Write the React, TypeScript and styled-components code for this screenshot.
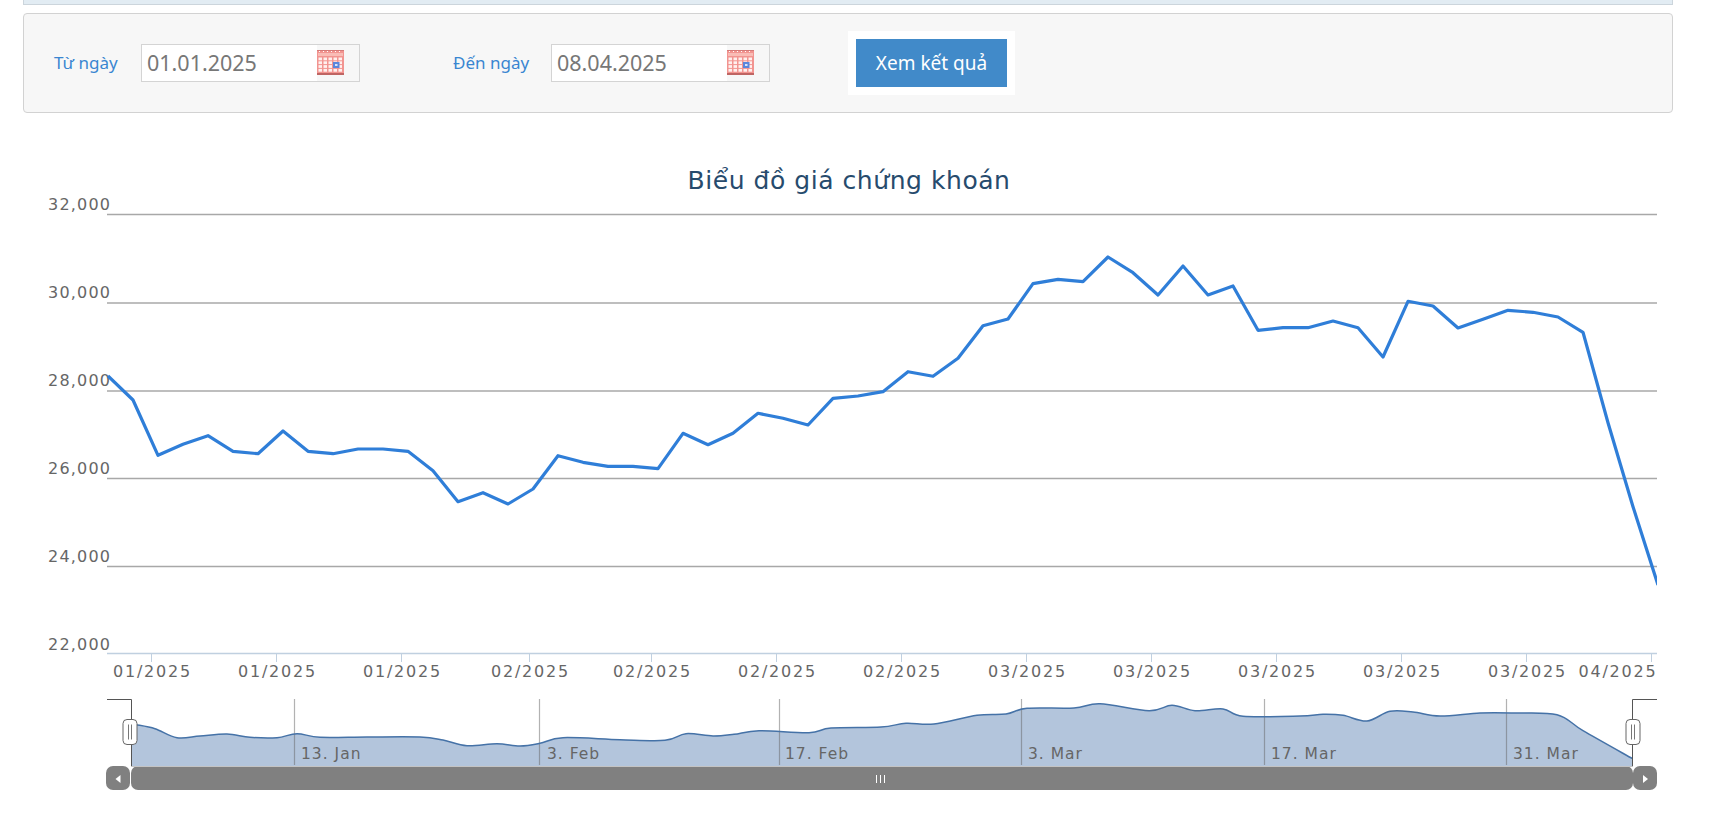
import styled, { createGlobalStyle } from 'styled-components';

const GlobalStyle = createGlobalStyle`
  html, body {
    margin: 0;
    padding: 0;
    background: #fff;
    overflow: hidden;
  }
`;

const CHART_FONT = '"DejaVu Sans", Verdana, sans-serif';

const Page = styled.div`
  width: 1717px;
  height: 821px;
  font-family: "Noto Sans", "Liberation Sans", sans-serif;
`;

const TopStrip = styled.div`
  box-sizing: border-box;
  width: 1650px;
  height: 5px;
  margin: 0 0 8px 23px;
  background: #e2ecf3;
  border: 1px solid #ccd5dc;
  border-top: none;
`;

const FilterPanel = styled.div`
  box-sizing: border-box;
  display: flex;
  align-items: center;
  width: 1650px;
  height: 100px;
  margin-left: 23px;
  padding-left: 30px;
  background: #f7f7f7;
  border: 1px solid #d2d2d2;
  border-radius: 4px;
`;

const FieldLabel = styled.label<{ $width: number }>`
  width: ${p => p.$width}px;
  color: #3a86d1;
  font-size: 17px;
  line-height: 20px;
`;

const DateBox = styled.div<{ $gap: number }>`
  box-sizing: border-box;
  display: flex;
  align-items: center;
  width: 219px;
  height: 38px;
  margin-right: ${p => p.$gap}px;
  background: #f7f7f7;
  border: 1px solid #d4d4d4;
`;

const DateValue = styled.div`
  box-sizing: border-box;
  width: 175px;
  height: 100%;
  padding-left: 5px;
  background: #fff;
  color: #777;
  font-size: 21.5px;
  line-height: 35px;
`;

const CalendarSvg = styled.svg`
  display: block;
  margin-top: -2px;
`;

const ButtonFrame = styled.div`
  padding: 8px;
  background: #fff;
`;

const SubmitButton = styled.button`
  display: block;
  width: 151px;
  height: 48px;
  padding: 0;
  border: none;
  background: #418ac9;
  color: #fff;
  font-family: inherit;
  font-size: 19px;
`;

const ChartSvg = styled.svg`
  display: block;
`;

const ChartTitle = styled.text`
  fill: #274b6d;
  font-family: ${CHART_FONT};
  font-size: 25px;
  letter-spacing: 0.55px;
  text-anchor: middle;
`;

const AxisLabel = styled.text<{ $wide?: boolean }>`
  fill: #666;
  font-family: ${CHART_FONT};
  font-size: 16px;
  letter-spacing: ${p => (p.$wide ? 1.8 : 1.2)}px;
`;

const NavigatorLabel = styled.text`
  fill: #666;
  font-family: ${CHART_FONT};
  font-size: 15.5px;
  letter-spacing: 1px;
`;

const PLOT_LEFT = 107;
const PLOT_RIGHT = 1657;

// closing prices read as pixel rows, one every 25px from x=108
const priceRows = [
  376, 400, 455.3, 444.3, 435.7, 451.3, 453.7, 431, 451.3, 453.7, 449, 449, 451.3, 470.7, 501.7, 492.7,
  504, 489, 455.7, 462.3, 466.3, 466.3, 468.7, 433.3, 444.7, 433.3, 413.3, 418.3, 425, 398.3, 396, 391.7,
  371.7, 376.3, 358.3, 325.7, 319, 283.7, 279.3, 281.7, 257, 272.7, 295, 266, 295, 286, 330.3, 327.7,
  327.7, 321, 327.7, 357, 301.3, 306, 328, 319.3, 310.3, 312.3, 317, 332.3, 422.7, 506.7, 585,
];

const gridRows = [
  { y: 214.5, label: '32,000', textY: 210 },
  { y: 303, label: '30,000', textY: 298 },
  { y: 391, label: '28,000', textY: 386 },
  { y: 478.5, label: '26,000', textY: 474 },
  { y: 566.5, label: '24,000', textY: 562 },
];

const xTicks = [
  { x: 151.5, label: '01/2025' },
  { x: 276.5, label: '01/2025' },
  { x: 401.5, label: '01/2025' },
  { x: 529.5, label: '02/2025' },
  { x: 651.5, label: '02/2025' },
  { x: 776.5, label: '02/2025' },
  { x: 901.5, label: '02/2025' },
  { x: 1026.5, label: '03/2025' },
  { x: 1151.5, label: '03/2025' },
  { x: 1276.5, label: '03/2025' },
  { x: 1401.5, label: '03/2025' },
  { x: 1526.5, label: '03/2025' },
  { x: 1651.5, label: '04/2025', labelX: 1617 },
];

const navigatorTicks = [
  { x: 294.5, label: '13. Jan', textX: 301 },
  { x: 539.5, label: '3. Feb', textX: 547 },
  { x: 779.5, label: '17. Feb', textX: 785 },
  { x: 1021.5, label: '3. Mar', textX: 1028 },
  { x: 1264.5, label: '17. Mar', textX: 1271 },
  { x: 1506.5, label: '31. Mar', textX: 1513 },
];

const navigatorLine: [number, number][] = [
  [136, 724.7], [155, 728.7], [177, 737.7], [200, 736], [227, 734], [250, 737.3], [277, 737.7], [297, 733.7],
  [320, 737.3], [367, 737], [420, 737], [443, 740], [467, 745.7], [497, 743.7], [520, 746], [540, 743.3],
  [563, 737.7], [620, 739.7], [665, 740.3], [686, 733.7], [713, 736], [734, 734.3], [759, 730.7], [809, 732.7],
  [831, 728], [881, 727], [906, 723.3], [934, 724], [977, 715.3], [1006, 714], [1027, 708.3], [1074, 708],
  [1100, 703.7], [1149, 710.7], [1172, 705.3], [1195, 710.7], [1223, 709], [1243, 716.3], [1300, 716],
  [1323, 714.3], [1343, 715.3], [1367, 721], [1390, 711.3], [1413, 712], [1440, 716], [1480, 713], [1513, 713],
  [1557, 714.7], [1583, 730.7], [1632.5, 758.7],
];

function toLine(points: [number, number][]) {
  return points.map(([x, y], i) => `${i ? 'L' : 'M'}${x} ${y}`).join(' ');
}

function toSmoothLine(points: [number, number][]) {
  let d = `M${points[0][0]} ${points[0][1]}`;
  for (let i = 0; i < points.length - 1; i++) {
    const p0 = points[Math.max(i - 1, 0)];
    const p1 = points[i];
    const p2 = points[i + 1];
    const p3 = points[Math.min(i + 2, points.length - 1)];
    const c1x = p1[0] + (p2[0] - p0[0]) / 6;
    const c1y = p1[1] + (p2[1] - p0[1]) / 6;
    const c2x = p2[0] - (p3[0] - p1[0]) / 6;
    const c2y = p2[1] - (p3[1] - p1[1]) / 6;
    d += ` C${c1x} ${c1y} ${c2x} ${c2y} ${p2[0]} ${p2[1]}`;
  }
  return d;
}

function CalendarIcon() {
  const cells = [];
  for (let row = 0; row < 4; row++) {
    for (let col = 0; col < 5; col++) {
      cells.push(<rect key={`${row}-${col}`} x={1.5 + col * 5} y={7.5 + row * 3.8} width={3.5} height={2.8} fill="#fff0ee" />);
    }
  }
  return (
    <CalendarSvg width="27" height="25" viewBox="0 0 27 25">
      <rect width="27" height="25" fill="#f29490" />
      <rect x="0" y="0" width="27" height="1" fill="#d57a78" />
      <rect x="1" y="3" width="25" height="3" fill="#f9bcb6" />
      <path d="M2 1.5h1M6 1.5h1M10 1.5h1M14 1.5h1M18 1.5h1M22 1.5h1" stroke="#fff" strokeWidth="1" />
      {cells}
      <rect x="16" y="12" width="6.5" height="6" fill="#5a86dc" />
      <rect x="18" y="14" width="2.5" height="2" fill="#d6e4f8" />
      <rect y="23" width="27" height="2" fill="#bf6563" />
    </CalendarSvg>
  );
}

function PriceSeries() {
  const points = priceRows.map((y, i) => [108 + i * 25, y] as [number, number]);
  return (
    <>
      <clipPath id="plot-clip">
        <rect x={PLOT_LEFT} y={200} width={PLOT_RIGHT - PLOT_LEFT} height={460} />
      </clipPath>
      <path d={toLine(points)} fill="none" stroke="#2f7ed8" strokeWidth={3.2} strokeLinejoin="round" clipPath="url(#plot-clip)" />
    </>
  );
}

function NavigatorHandle({ x }: { x: number }) {
  return (
    <g>
      <rect x={x - 7} y={719.5} width={14} height={25} rx={4} fill="#fff" stroke="#666" />
      <path d={`M${x - 1.5} 724.5V739.5M${x + 1.5} 724.5V739.5`} stroke="#777" />
    </g>
  );
}

function Navigator() {
  const line = toSmoothLine(navigatorLine);
  return (
    <g>
      <path d={`${line} L1632.5 766 L131.5 766 L131.5 724 L136 724.7 Z`} fill="#b3c5dc" />
      {navigatorTicks.map(t => (
        <g key={t.label}>
          <path d={`M${t.x} 699V765`} stroke="#666" strokeOpacity={0.5} strokeWidth={1.2} />
          <NavigatorLabel x={t.textX} y={759}>{t.label}</NavigatorLabel>
        </g>
      ))}
      <path d={line} fill="none" stroke="#4572a7" strokeWidth={1.5} />
      <path d="M107 699.5H131.5V766" fill="none" stroke="#555" />
      <path d="M1657 699.5H1632.5V766" fill="none" stroke="#555" />
      <NavigatorHandle x={130} />
      <NavigatorHandle x={1633} />
      <rect x={107} y={766} width={1550} height={24} fill="#fff" />
      <rect x={131} y={766} width={1502} height={24} rx={7} fill="#808080" />
      <rect x={131} y={766} width={1502} height={1} fill="#c4c4c4" />
      <rect x={106} y={766} width={24} height={24} rx={7} fill="#808080" />
      <rect x={1633} y={766} width={24} height={24} rx={7} fill="#808080" />
      <path d="M120.5 775V783L115.5 779Z" fill="#fff" />
      <path d="M1643 775V783L1648 779Z" fill="#fff" />
      <path d="M876.5 775V783M880.5 775V783M884.5 775V783" stroke="#fff" />
    </g>
  );
}

function PriceChart() {
  return (
    <ChartSvg width={1717} height={708} viewBox="0 113 1717 708">
      <ChartTitle x={849} y={189}>Biểu đồ giá chứng khoán</ChartTitle>
      {gridRows.map(r => (
        <g key={r.label}>
          <path d={`M${PLOT_LEFT} ${r.y}H${PLOT_RIGHT}`} stroke="#a8a8a8" strokeWidth={1.3} />
          <AxisLabel x={48} y={r.textY}>{r.label}</AxisLabel>
        </g>
      ))}
      <AxisLabel x={48} y={650}>22,000</AxisLabel>
      <path d={`M${PLOT_LEFT} 653.5H${PLOT_RIGHT}`} stroke="#c0d0e0" strokeWidth={1.5} />
      {xTicks.map(t => (
        <g key={t.x}>
          <path d={`M${t.x} 653V662`} stroke="#c0d0e0" />
          <AxisLabel $wide x={(t.labelX ?? t.x) + 1} y={677} textAnchor="middle">{t.label}</AxisLabel>
        </g>
      ))}
      <PriceSeries />
      <Navigator />
    </ChartSvg>
  );
}

export default function App() {
  return (
    <Page>
      <GlobalStyle />
      <TopStrip />
      <FilterPanel>
        <FieldLabel $width={87}>Từ ngày</FieldLabel>
        <DateBox $gap={93}>
          <DateValue>01.01.2025</DateValue>
          <CalendarIcon />
        </DateBox>
        <FieldLabel $width={98}>Đến ngày</FieldLabel>
        <DateBox $gap={78}>
          <DateValue>08.04.2025</DateValue>
          <CalendarIcon />
        </DateBox>
        <ButtonFrame>
          <SubmitButton type="button">Xem kết quả</SubmitButton>
        </ButtonFrame>
      </FilterPanel>
      <PriceChart />
    </Page>
  );
}
